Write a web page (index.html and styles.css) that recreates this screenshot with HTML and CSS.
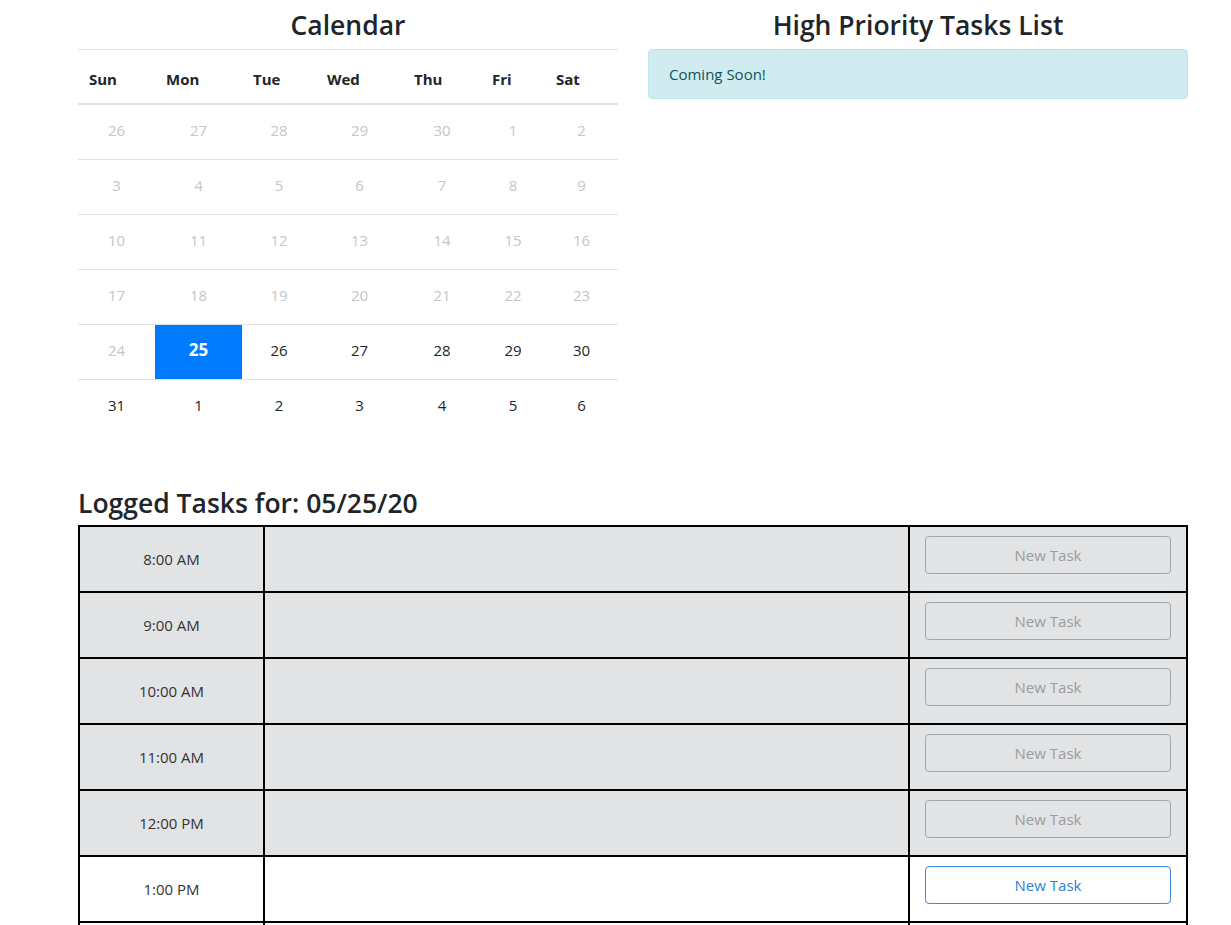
FILE: index.html
```html
<!DOCTYPE html>
<html lang="en">
<head>
<meta charset="utf-8">
<title>Planner</title>
<link rel="stylesheet" href="styles.css">
</head>
<body>
<div class="page">
  <div class="top-row">
    <section class="col">
      <h3 class="heading center">Calendar</h3>
      <table class="cal">
        <colgroup>
          <col class="c-sun"><col class="c-mon"><col class="c-tue"><col class="c-wed"><col class="c-thu"><col class="c-fri"><col class="c-sat">
        </colgroup>
        <thead>
          <tr><th>Sun</th><th>Mon</th><th>Tue</th><th>Wed</th><th>Thu</th><th>Fri</th><th>Sat</th></tr>
        </thead>
        <tbody>
          <tr><td class="dim">26</td><td class="dim">27</td><td class="dim">28</td><td class="dim">29</td><td class="dim">30</td><td class="dim">1</td><td class="dim">2</td></tr>
          <tr><td class="dim">3</td><td class="dim">4</td><td class="dim">5</td><td class="dim">6</td><td class="dim">7</td><td class="dim">8</td><td class="dim">9</td></tr>
          <tr><td class="dim">10</td><td class="dim">11</td><td class="dim">12</td><td class="dim">13</td><td class="dim">14</td><td class="dim">15</td><td class="dim">16</td></tr>
          <tr><td class="dim">17</td><td class="dim">18</td><td class="dim">19</td><td class="dim">20</td><td class="dim">21</td><td class="dim">22</td><td class="dim">23</td></tr>
          <tr><td class="dim">24</td><td class="today">25</td><td>26</td><td>27</td><td>28</td><td>29</td><td>30</td></tr>
          <tr><td>31</td><td>1</td><td>2</td><td>3</td><td>4</td><td>5</td><td>6</td></tr>
        </tbody>
      </table>
    </section>
    <section class="col">
      <h3 class="heading center">High Priority Tasks List</h3>
      <div class="alert">Coming Soon!</div>
    </section>
  </div>

  <h3 class="heading logged">Logged Tasks for: 05/25/20</h3>
  <table class="tasks">
    <colgroup><col class="t-time"><col class="t-text"><col class="t-btn"></colgroup>
    <tbody>
      <tr class="past"><td class="time">8:00 AM</td><td></td><td class="act"><button class="btn btn-past">New Task</button></td></tr>
      <tr class="past"><td class="time">9:00 AM</td><td></td><td class="act"><button class="btn btn-past">New Task</button></td></tr>
      <tr class="past"><td class="time">10:00 AM</td><td></td><td class="act"><button class="btn btn-past">New Task</button></td></tr>
      <tr class="past"><td class="time">11:00 AM</td><td></td><td class="act"><button class="btn btn-past">New Task</button></td></tr>
      <tr class="past"><td class="time">12:00 PM</td><td></td><td class="act"><button class="btn btn-past">New Task</button></td></tr>
      <tr><td class="time">1:00 PM</td><td></td><td class="act"><button class="btn btn-future">New Task</button></td></tr>
      <tr><td class="time">2:00 PM</td><td></td><td class="act"><button class="btn btn-future">New Task</button></td></tr>
    </tbody>
  </table>
</div>
</body>
</html>
```

FILE: styles.css
```css
* { box-sizing: border-box; }
html, body { margin: 0; padding: 0; background: #fff; }
body {
  font-family: "Segoe UI", "Open Sans", "Noto Sans", sans-serif;
  font-size: 16px;
  line-height: 1.5;
  color: #212529;
}
.page {
  width: 1110px;
  margin-left: 78px;
  padding-top: 8px;
}
.top-row {
  display: grid;
  grid-template-columns: 540px 540px;
  column-gap: 30px;
}
.heading {
  font-size: 26.5px;
  font-weight: 600;
  line-height: 34px;
  margin: 0 0 7px;
  color: #212529;
}
.center { text-align: center; }

.cal {
  width: 100%;
  border-collapse: collapse;
  table-layout: fixed;
  margin-bottom: 16px;
}
.c-sun { width: 77px; }
.c-mon { width: 87px; }
.c-tue { width: 74px; }
.c-wed { width: 87px; }
.c-thu { width: 78px; }
.c-fri { width: 64px; }
.c-sat { width: 73px; }
.cal th {
  text-align: left;
  font-weight: 700;
  font-size: 15px;
  padding: 17px 11px 12px;
  line-height: 24px;
  border-top: 1px solid #dee2e6;
  border-bottom: 2px solid #dee2e6;
}
.cal td {
  text-align: center;
  font-size: 15px;
  line-height: 24px;
  padding: 13px 4px 17px;
  border-top: 1px solid #dee2e6;
  color: #212529;
}
.cal td.dim { color: #c4c6c8; }
.cal td.today {
  background: #007bff;
  color: #fff;
  font-weight: 700;
  font-size: 17px;
}

.alert {
  background: #d1ecf1;
  border: 1px solid #bee5eb;
  color: #0c5460;
  border-radius: 4px;
  padding: 12px 20px;
  font-size: 15px;
  line-height: 24px;
}

.logged {
  margin-top: 36px;
  margin-bottom: 5px;
}
.tasks {
  width: 100%;
  border-collapse: collapse;
  table-layout: fixed;
}
.t-time { width: 185px; }
.t-btn { width: 278px; }
.tasks td {
  border: 2px solid #000;
  height: 66px;
  padding: 0;
  vertical-align: middle;
}
.tasks tr.past td { background: #e2e3e5; }
.tasks td.time {
  text-align: center;
  font-size: 15px;
  color: #333;
}
.tasks td.act {
  padding: 9px 15px 17px;
  vertical-align: top;
}
.btn {
  display: block;
  width: 100%;
  height: 38px;
  font-family: inherit;
  font-size: 15px;
  line-height: 24px;
  border-radius: 4px;
  background: transparent;
  padding: 6px 12px;
}
.btn-past {
  border: 1px solid #a3a6a9;
  color: #9a9da1;
}
.btn-future {
  border: 1px solid #3d8ee0;
  color: #2d7fd6;
}
```
